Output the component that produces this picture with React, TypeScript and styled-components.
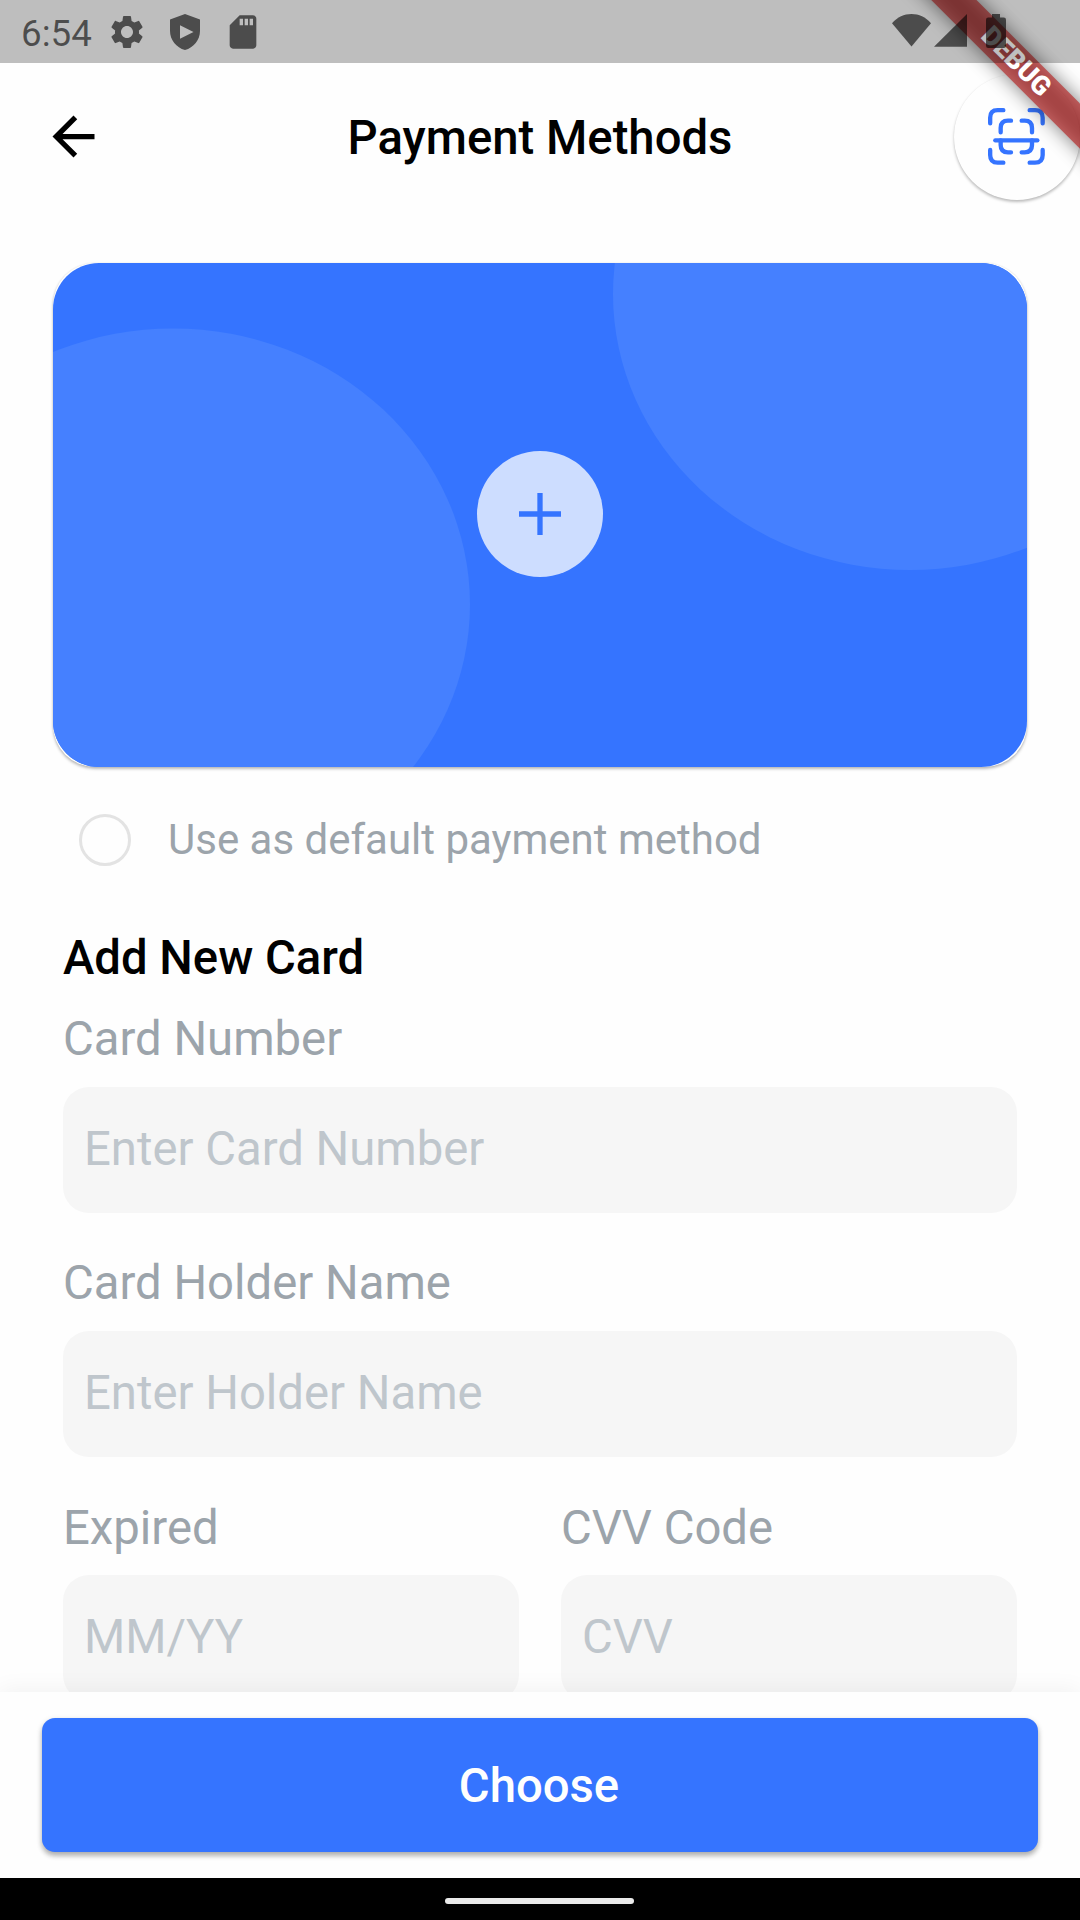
import React from "react";
import styled, { createGlobalStyle } from "styled-components";
import { MdArrowBack, MdSettings, MdSdCard } from "react-icons/md";

const blue = "#3574ff";

const GlobalStyle = createGlobalStyle`
  * { box-sizing: border-box; }
  html, body { margin: 0; padding: 0; background: #fefefe; }
  body { font-family: Roboto, "Liberation Sans", sans-serif; }
`;

const Screen = styled.div`
  position: relative;
  display: flex;
  flex-direction: column;
  width: 1080px;
  height: 1920px;
  overflow: hidden;
  background: #fefefe;
`;

const StatusBar = styled.div`
  position: relative;
  z-index: 3;
  flex: none;
  display: flex;
  justify-content: space-between;
  height: 63px;
  padding: 0 74px 0 21px;
  background: rgba(0, 0, 0, 0.25);
  color: rgba(0, 0, 0, 0.6);
`;

const StatusGroup = styled.div<{ $gap: number; $height: number }>`
  display: flex;
  align-items: center;
  gap: ${(p) => p.$gap}px;
  height: ${(p) => p.$height}px;
  svg { display: block; flex: none; }
`;

const Clock = styled.span`
  width: 86px;
  padding-top: 4px;
  font-size: 36.75px;
  line-height: 44px;
  white-space: nowrap;
`;

const IconRow = styled.span`
  display: flex;
  align-items: center;
  gap: 23px;
  margin-left: -23px;
`;

const Header = styled.header`
  flex: none;
  display: grid;
  grid-template-columns: 126px 1fr 126px;
  align-items: center;
  height: 147px;
`;

const BackButton = styled.button`
  display: flex;
  margin: 0 0 0 42px;
  padding: 0;
  border: 0;
  background: none;
  color: #000;
`;

const Title = styled.h1`
  margin: 0;
  padding: 2px 0 0 0;
  text-align: center;
  font-size: 47.25px;
  font-weight: 500;
  line-height: 56px;
  color: #000;
`;

const ScanButton = styled.button`
  display: flex;
  align-items: center;
  justify-content: center;
  width: 126px;
  height: 126px;
  padding: 0 1px 1px 0;
  border: 0;
  border-radius: 50%;
  background: #fefefe;
  box-shadow: 0 2px 3px rgba(0, 0, 0, 0.26), 0 0 1px rgba(0, 0, 0, 0.06);
`;

const Content = styled.main`
  flex: 1;
  min-height: 0;
  overflow: hidden;
  display: flex;
  flex-direction: column;
  padding-top: 53px;
`;

const CardPreview = styled.div`
  position: relative;
  flex: none;
  display: flex;
  align-items: center;
  justify-content: center;
  width: 974px;
  height: 504px;
  margin-left: 53px;
  padding-bottom: 2px;
  border-radius: 42px;
  background: #fefefe;
  box-shadow: 0 2px 3px rgba(0, 0, 0, 0.26), 0 0 2px rgba(0, 0, 0, 0.1);
`;

const CardArt = styled.svg`
  position: absolute;
  inset: 0;
  border-radius: 46px;
`;

const AddButton = styled.button`
  position: relative;
  display: flex;
  align-items: center;
  justify-content: center;
  width: 126px;
  height: 126px;
  padding: 0;
  border: 0;
  border-radius: 50%;
  background: #cdddff;
`;

const DefaultOption = styled.label`
  flex: none;
  display: flex;
  align-items: center;
  gap: 37px;
  height: 52px;
  margin: 47px 0 0 79px;
  font-size: 42px;
  line-height: 50px;
  color: #9ca4ab;
`;

const Radio = styled.span`
  width: 52px;
  height: 52px;
  border: 3px solid #e3e3e3;
  border-radius: 50%;
  background: #fefefe;
`;

const Form = styled.form`
  flex: none;
  display: flex;
  flex-direction: column;
  padding: 64px 63px 0;
`;

const FormTitle = styled.h2`
  margin: 0 0 25px;
  font-size: 47.25px;
  font-weight: 500;
  line-height: 56px;
  color: #000;
`;

const Field = styled.div`
  flex: none;
  display: flex;
  flex-direction: column;
  height: 244px;
`;

const FieldLabel = styled.label`
  margin-bottom: 20px;
  font-size: 47.25px;
  line-height: 56px;
  color: #9ca4ab;
`;

const FieldRow = styled.div`
  display: grid;
  grid-template-columns: 1fr 1fr;
  gap: 42px;
  ${FieldLabel} {
    padding-top: 1px;
    margin-bottom: 19px;
  }
`;

const FieldInput = styled.input`
  width: 100%;
  height: 126px;
  padding: 0 21px 2px;
  border: 0;
  border-radius: 26px;
  outline: 0;
  background: #f6f6f6;
  font-family: inherit;
  font-size: 47.25px;
  color: #171725;
  &::placeholder { color: #bfc6cc; opacity: 1; }
`;

const BottomPanel = styled.footer`
  position: relative;
  flex: none;
  height: 186px;
  padding: 26px 42px;
  background: #fefefe;
  box-shadow: 0 -2px 22px rgba(0, 0, 0, 0.055);
`;

const ChooseButton = styled.button`
  display: block;
  width: 996px;
  height: 134px;
  padding: 1px 2px 0 0;
  border: 0;
  border-radius: 13px;
  background: ${blue};
  box-shadow: 0 4px 5px rgba(0, 0, 0, 0.23), 0 2px 6px rgba(0, 0, 0, 0.14);
  font-family: inherit;
  font-size: 47.25px;
  font-weight: 500;
  color: #fefefe;
`;

const NavBar = styled.nav`
  position: relative;
  flex: none;
  display: flex;
  justify-content: center;
  height: 42px;
  padding: 20px 1px 0 0;
  background: #000;
`;

const NavHandle = styled.span`
  width: 189px;
  height: 6px;
  border-radius: 3px;
  background: #eaeaea;
`;

/* Diagonal ribbon laid over the top-right corner of the screen. */
const Ribbon = styled.div`
  position: absolute;
  z-index: 2;
  left: 867px;
  top: 47px;
  width: 300px;
  height: 31.5px;
  transform: rotate(45deg);
  text-align: center;
  font-size: 26.8px;
  font-weight: 900;
  line-height: 31.5px;
  color: #fff;
  pointer-events: none;
  &::before {
    content: "";
    position: absolute;
    inset: 0;
    background: rgba(0, 0, 0, 0.5);
    filter: blur(9.6px);
  }
`;

const RibbonText = styled.span`
  position: relative;
  display: block;
  padding-right: 3px;
  background: rgba(183, 28, 28, 0.627);
`;

const Spacer = styled.span<{ $w: number }>`
  flex: none;
  width: ${(p) => p.$w}px;
`;

const ShieldIcon = () => (
  <svg width="30" height="36" viewBox="0 0 30 36">
    <path
      fill="currentColor"
      fillRule="evenodd"
      d="M15 0L30 5.6V17C30 26 23.6 33.7 15 36C6.400 33.700 0 26 0 17V5.600ZM10 11.300V24.700L23.500 18Z"
    />
  </svg>
);

const WifiIcon = () => (
  <svg width="39" height="34" viewBox="0 0 39 34">
    <path fill="currentColor" d="M0 9.200C5.500 3 12 0 19.500 0S33.500 3 39 9.200L19.500 32.500Z" />
  </svg>
);

const SignalIcon = () => (
  <svg width="33" height="34" viewBox="0 0 33 34">
    <path fill="currentColor" d="M0 32.800L33 0V32.800Z" />
  </svg>
);

const BatteryIcon = () => (
  <svg width="20" height="34" viewBox="0 0 20 34">
    <path
      fill="currentColor"
      d="M6 0H14V3.500H17.800Q20 3.500 20 5.700V31.800Q20 34 17.800 34H2.200Q0 34 0 31.800V5.700Q0 3.500 2.200 3.500H6Z"
    />
  </svg>
);

const ScanIcon = () => (
  <svg
    width="57"
    height="57"
    viewBox="0 0 171 171"
    fill="none"
    stroke={blue}
    strokeWidth="13"
    strokeLinecap="round"
    strokeLinejoin="round"
  >
    <path d="M6.500 46V29Q6.500 6.500 29 6.500H46" />
    <path d="M125 6.500H141Q164 6.500 164 29V46" />
    <path d="M164 126V141Q164 164 141 164H125" />
    <path d="M46 164H29Q6.500 164 6.500 141V126" />
    <path d="M38 73V60Q38 38 60 38H69" />
    <path d="M101 38H110Q132 38 132 60V73" />
    <path d="M22 97H148" />
    <path d="M38 97V111Q38 133 60 133H69" />
    <path d="M132 97V111Q132 133 110 133H101" />
  </svg>
);

const PlusIcon = () => (
  <svg width="42" height="42" viewBox="0 0 42 42" stroke={blue} strokeWidth="5.3">
    <path d="M0 21H42M21 0V42" />
  </svg>
);

function TextField({ label, hint }: { label: string; hint: string }) {
  return (
    <Field>
      <FieldLabel>{label}</FieldLabel>
      <FieldInput placeholder={hint} />
    </Field>
  );
}

export default function App() {
  return (
    <Screen>
      <GlobalStyle />
      <StatusBar>
        <StatusGroup $gap={23} $height={63}>
          <Clock>6:54</Clock>
          <IconRow>
            <MdSettings size={40} />
            <ShieldIcon />
            <MdSdCard size={40} />
          </IconRow>
        </StatusGroup>
        <StatusGroup $gap={0} $height={62}>
          <WifiIcon />
          <Spacer $w={3.5} />
          <SignalIcon />
          <Spacer $w={19} />
          <BatteryIcon />
        </StatusGroup>
      </StatusBar>
      <Header>
        <BackButton aria-label="Back">
          <MdArrowBack size={63} />
        </BackButton>
        <Title>Payment Methods</Title>
        <ScanButton aria-label="Scan card">
          <ScanIcon />
        </ScanButton>
      </Header>
      <Content>
        <CardPreview>
          <CardArt width="974" height="504" viewBox="0 0 974 504">
            <rect width="974" height="504" fill={blue} />
            <ellipse cx="120" cy="341.5" rx="297" ry="276" fill="#4580ff" />
            <ellipse cx="857" cy="31" rx="297" ry="276" fill="#4580ff" />
          </CardArt>
          <AddButton aria-label="Add card">
            <PlusIcon />
          </AddButton>
        </CardPreview>
        <DefaultOption>
          <Radio />
          Use as default payment method
        </DefaultOption>
        <Form>
          <FormTitle>Add New Card</FormTitle>
          <TextField label="Card Number" hint="Enter Card Number" />
          <TextField label="Card Holder Name" hint="Enter Holder Name" />
          <FieldRow>
            <TextField label="Expired" hint="MM/YY" />
            <TextField label="CVV Code" hint="CVV" />
          </FieldRow>
        </Form>
      </Content>
      <BottomPanel>
        <ChooseButton>Choose</ChooseButton>
      </BottomPanel>
      <NavBar>
        <NavHandle />
      </NavBar>
      <Ribbon>
        <RibbonText>DEBUG</RibbonText>
      </Ribbon>
    </Screen>
  );
}
